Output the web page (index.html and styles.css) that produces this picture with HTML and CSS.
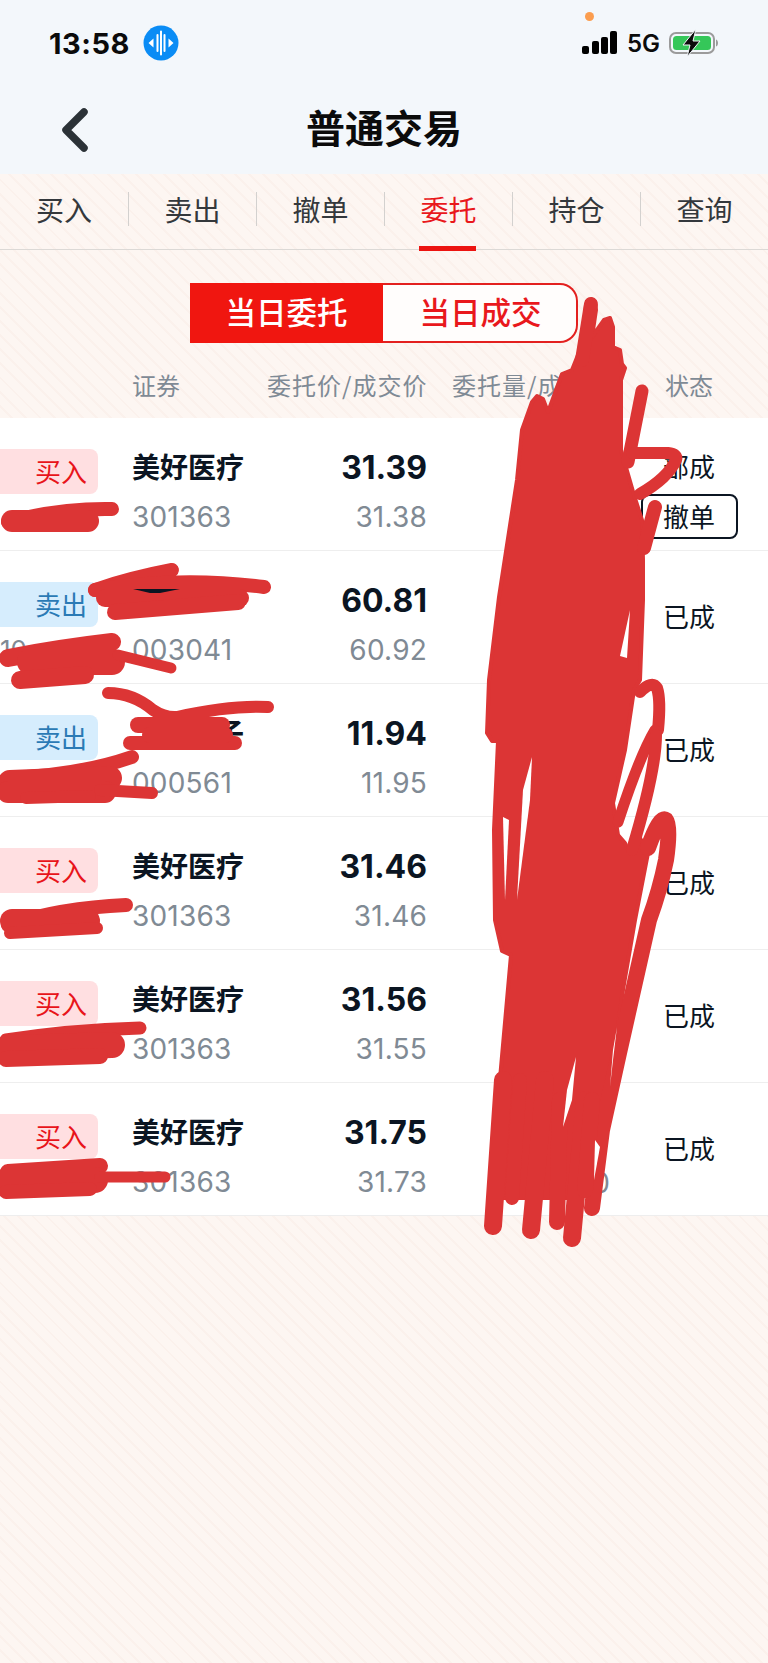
FILE: index.html
```html
<!DOCTYPE html>
<html lang="zh-CN">
<head>
    <meta charset="UTF-8">
    <meta name="viewport" content="width=device-width, initial-scale=1.0">
    <title>普通交易</title>
    <link rel="stylesheet" href="styles.css">
</head>
<body>
    <header class="top">
        <div class="status-bar">
            <div class="status-left">
                <span class="clock">13:58</span>
                <svg class="voice" width="36" height="36" viewBox="0 0 36 36">
                    <circle cx="18" cy="18" r="17.5" fill="#0a8cf5"/>
                    <path d="M14.5 10v16M18 6.5v23M21.500 10v16" stroke="#fff" stroke-width="2" stroke-linecap="round"/>
                    <path d="M10.500 13.500v9L5.500 18zM25.500 13.500v9l5-4.500z" fill="#fff"/>
                </svg>
            </div>
            <span class="mic-dot"></span>
            <div class="status-right">
                <svg width="36" height="24" viewBox="0 0 36 24">
                    <rect x="0" y="15" width="7" height="8" rx="2"/>
                    <rect x="10" y="10" width="7" height="13" rx="2"/>
                    <rect x="19" y="6" width="7" height="17" rx="2"/>
                    <rect x="28" y="0" width="7" height="23" rx="2"/>
                </svg>
                <span class="net">5G</span>
                <svg width="50" height="28" viewBox="0 0 50 28">
                    <rect x="1" y="4" width="44" height="20" rx="6" fill="none" stroke="#9b9b9b" stroke-width="2"/>
                    <rect x="4" y="7" width="38" height="14" rx="3.500" fill="#35c759"/>
                    <path d="M47 10.500c1.500.5 2 2 2 3.500s-.5 3-2 3.500z" fill="#9b9b9b"/>
                    <path d="M27 0 14 16h7l-3 12 13-16h-7z" fill="#0b0b0b" stroke="#f3f7fb" stroke-width="1"/>
                </svg>
            </div>
        </div>
        <nav class="nav-bar">
            <svg class="back" width="32" height="50" viewBox="0 0 32 50">
                <path d="M25 7 7 25l18 18" fill="none" stroke="#2b3237" stroke-width="7.500" stroke-linecap="round" stroke-linejoin="round"/>
            </svg>
            <h1 class="title">普通交易</h1>
        </nav>
    </header>

    <main class="content">
        <ul class="tabs">
            <li class="tab">买入</li>
            <li class="tab">卖出</li>
            <li class="tab">撤单</li>
            <li class="tab active">委托</li>
            <li class="tab">持仓</li>
            <li class="tab">查询</li>
        </ul>

        <div class="segment">
            <div class="seg seg-on">当日委托</div>
            <div class="seg seg-off">当日成交</div>
        </div>

        <div class="list-head">
            <span></span>
            <span>证券</span>
            <span class="price-head">委托价/成交价</span>
            <span class="qty-head">委托量/成交量</span>
            <span class="state-head">状态</span>
        </div>

        <section class="orders">
            <div class="order">
                <div class="side"><span class="badge buy">买入</span></div>
                <div class="stock"><div class="name">美好医疗</div><div class="code">301363</div></div>
                <div class="price"><div class="p1">31.39</div><div class="p2">31.38</div></div>
                <div class="qty"></div>
                <div class="state">
                    <div class="state-text">部成</div>
                    <div class="cancel">撤单</div>
                </div>
            </div>
            <div class="order">
                <div class="side"><span class="badge sell">卖出</span><span class="time">10</span></div>
                <div class="stock"><div class="name">&nbsp;</div><div class="code">003041</div></div>
                <div class="price"><div class="p1">60.81</div><div class="p2">60.92</div></div>
                <div class="qty"></div>
                <div class="state mid">已成</div>
            </div>
            <div class="order">
                <div class="side"><span class="badge sell">卖出</span></div>
                <div class="stock"><div class="name">　　　子</div><div class="code">000561</div></div>
                <div class="price"><div class="p1">11.94</div><div class="p2">11.95</div></div>
                <div class="qty"></div>
                <div class="state mid">已成</div>
            </div>
            <div class="order">
                <div class="side"><span class="badge buy">买入</span></div>
                <div class="stock"><div class="name">美好医疗</div><div class="code">301363</div></div>
                <div class="price"><div class="p1">31.46</div><div class="p2">31.46</div></div>
                <div class="qty"></div>
                <div class="state mid">已成</div>
            </div>
            <div class="order">
                <div class="side"><span class="badge buy">买入</span></div>
                <div class="stock"><div class="name">美好医疗</div><div class="code">301363</div></div>
                <div class="price"><div class="p1">31.56</div><div class="p2">31.55</div></div>
                <div class="qty"></div>
                <div class="state mid">已成</div>
            </div>
            <div class="order">
                <div class="side"><span class="badge buy">买入</span></div>
                <div class="stock"><div class="name">美好医疗</div><div class="code">301363</div></div>
                <div class="price"><div class="p1">31.75</div><div class="p2">31.73</div></div>
                <div class="qty"><div class="q2">0</div></div>
                <div class="state mid">已成</div>
            </div>
        </section>
    </main>

    <!-- red marker scribbles drawn over the screenshot -->
    <svg class="scribble" width="768" height="1663" viewBox="0 0 768 1663">
        <!-- main block over the quantity column -->
        <path class="solid" d="M499 597 517 480 522 430 532 402 537 396 543 399 548 412 562 374 572 370 582 345 586 305 591 300 595 302 596 310 592 337 604 320 610 318 613 327 613 347 620 350 622 364 625 368 621 380 621 450 634 495 642 520 643 560 643 600 640 680 634 690 625 750 613 803 618 835 625 843 628 850 640 838 648 853 635 920 623 990 616 1040 606 1090 598 1190 570 1198 502 1198 492 1147 499 1090 511 955 502 951 495 920 494 830 498 741 492 741 487 733 489 680Z"/>
        <g fill="none">
            <path stroke-width="14" d="M591 304 582 360"/>
            <path stroke-width="13" d="M642 391 628 462"/>
            <path stroke-width="12" d="M632 453H668Q678 454 676 460 668 478 640 494"/>
            <path stroke-width="14" d="M655 507 644 548"/>
            <path stroke-width="12" d="M640 692Q652 680 657 688 661 700 658 730"/>
            <path stroke-width="11" d="M655 730Q640 755 618 822"/>
            <path stroke-width="12" d="M656 735Q656 770 632 850"/>
            <path stroke-width="16" d="M648 848Q660 815 666 820 671 826 666 860 660 890 649 920L619 1053 602 1130 592 1208"/>
            <path stroke-width="18" d="M503 1080 493 1226"/>
            <path stroke-width="14" d="M520 1080 512 1198"/>
            <path stroke-width="18" d="M545 1080 531 1230"/>
            <path stroke-width="16" d="M560 1100 557 1222"/>
            <path stroke-width="18" d="M585 1100 572 1238"/>
            <path stroke-width="16" d="M592 1100 585 1190"/>

            <!-- row 1 left -->
            <path stroke-width="14" d="M8 522Q60 508 112 509"/>
            <path stroke-width="22" d="M12 521H88"/>
            <!-- row 2 -->
            <path stroke-width="14" d="M95 590Q130 578 172 570"/>
            <path stroke-width="14" d="M95 590Q180 576 264 587"/>
            <path stroke-width="18" d="M105 598H240"/>
            <path stroke-width="16" d="M115 612 238 602"/>
            <path stroke-width="18" d="M8 658Q60 648 112 642"/>
            <path stroke-width="26" d="M30 662H112"/>
            <path stroke-width="11" d="M118 655 171 668"/>
            <path stroke-width="18" d="M20 680 85 675"/>
            <!-- row 3 -->
            <path stroke-width="12" d="M108 693Q133 693 153 710 165 718 177 717 230 705 268 707"/>
            <path stroke-width="16" d="M138 725H222"/>
            <path stroke-width="14" d="M130 743H235"/>
            <path stroke-width="16" d="M150 735H225"/>
            <path stroke-width="14" d="M132 757Q80 775 10 778"/>
            <path stroke-width="24" d="M10 782 110 778"/>
            <path stroke-width="22" d="M8 792H105"/>
            <path stroke-width="12" d="M26 798 90 796"/>
            <path stroke-width="12" d="M100 790 152 793"/>
            <!-- row 4 -->
            <path stroke-width="14" d="M8 925Q60 908 126 905"/>
            <path stroke-width="24" d="M12 921H88"/>
            <path stroke-width="12" d="M10 933 97 928"/>
            <!-- row 5 -->
            <path stroke-width="13" d="M6 1040Q70 1030 140 1028"/>
            <path stroke-width="26" d="M8 1048 112 1045"/>
            <path stroke-width="16" d="M6 1059 100 1056"/>
            <!-- row 6 -->
            <path stroke-width="16" d="M8 1172 100 1166"/>
            <path stroke-width="26" d="M8 1180H95"/>
            <path stroke-width="11" d="M100 1177H165"/>
            <path stroke-width="14" d="M6 1192 90 1189"/>
        </g>
        <!-- thin gaps the marker missed -->
        <g class="gap">
            <path d="M630 610 620 656 627 658Z"/>
            <path d="M532 757 530 800 517 900 523 790Z"/>
            <path d="M503 817 509 820 505 900Z"/>
            <path d="M576 1057 572 1100 563 1127 567 1090Z"/>
            <path d="M617 1027 613 1060 610 1087 613 1050Z"/>
            <path d="M595 1140 600 1147 594 1180Z"/>
        </g>
        <path class="ink" d="M133 589H180L160 593H150Z"/>
    </svg>
</body>
</html>
```

FILE: styles.css
```css
* {
    box-sizing: border-box;
}
body {
    position: relative;
    width: 768px;
    height: 1663px;
    margin: 0;
    overflow: hidden;
    font-family: "Noto Sans CJK SC", sans-serif;
    color: #0b1522;
    background: repeating-linear-gradient(45deg, #fdf6f2 0, #fdf6f2 8px, #fbf1ec 8px, #fbf1ec 10px);
}

/* status + nav */
.top {
    background: #f3f7fb;
    height: 174px;
}
.status-bar {
    position: relative;
    display: flex;
    justify-content: space-between;
    align-items: center;
    height: 86px;
    padding: 0 49px;
}
.status-left {
    display: flex;
    align-items: center;
    gap: 13px;
}
.status-right {
    display: flex;
    align-items: center;
    gap: 9px;
}
.clock {
    font-family: Inter, sans-serif;
    font-weight: 700;
    font-size: 29px;
    letter-spacing: 0.5px;
    color: #0b0b0b;
}
.net {
    font-family: Inter, sans-serif;
    font-weight: 600;
    font-size: 24px;
    color: #0b0b0b;
}
.mic-dot {
    position: absolute;
    left: 585px;
    top: 12px;
    width: 9px;
    height: 9px;
    border-radius: 50%;
    background: #fb9d4f;
}
.nav-bar {
    display: grid;
    grid-template-columns: 1fr auto 1fr;
    align-items: center;
    height: 88px;
    padding-left: 59px;
}
.title {
    margin: 0;
    padding: 0 59px 8px 0;
    font-size: 39px;
    font-weight: 700;
    color: #0b0b0b;
}

/* tabs */
.tabs {
    display: flex;
    align-items: center;
    height: 76px;
    margin: 0;
    padding: 0 0 5px;
    list-style-type: none;
    border-bottom: 1px solid #dcd9d6;
}
.tab {
    position: relative;
    flex: 0 0 128px;
    height: 34px;
    line-height: 34px;
    text-align: center;
    font-size: 28px;
    color: #34383c;
}
.tab + .tab {
    border-left: 1px solid #d3d1cf;
}
.tab.active {
    color: #e9181c;
}
.tab.active::after {
    content: "";
    position: absolute;
    left: 34px;
    width: 57px;
    bottom: -25px;
    height: 5px;
    background: #ec1411;
}

/* segment */
.segment {
    display: flex;
    width: 388px;
    height: 60px;
    margin: 33px auto 0;
}
.seg {
    display: flex;
    align-items: center;
    justify-content: center;
    padding-bottom: 4px;
    font-size: 30.5px;
    font-weight: 500;
}
.seg-on {
    width: 193px;
    background: #f01610;
    color: #fff;
}
.seg-off {
    width: 195px;
    padding-left: 2px;
    background: #fffdfc;
    color: #e9181c;
    border: 2px solid #e3201f;
    border-left: none;
    border-radius: 0 18px 18px 0;
}

/* list */
.list-head,
.order {
    display: grid;
    grid-template-columns: 132px 135px 160px 183px 158px;
}
.list-head {
    align-items: center;
    height: 75px;
    padding-top: 7px;
    font-size: 24px;
    color: #7f8a95;
}
.price-head {
    white-space: nowrap;
    text-align: right;
    letter-spacing: 1px;
}
.qty-head {
    padding-left: 25px;
    white-space: nowrap;
    letter-spacing: 1px;
}
.state-head {
    text-align: center;
}
.orders {
    background: #fff;
}
.order {
    height: 133px;
    border-bottom: 1px solid #eeeeee;
}
.side {
    display: flex;
    flex-direction: column;
    align-items: flex-start;
    padding-top: 31px;
}
.badge {
    width: 98px;
    height: 45px;
    line-height: 43px;
    padding-left: 35px;
    border-radius: 0 8px 8px 0;
    font-size: 26px;
}
.buy {
    background: #ffdfe1;
    color: #e8141a;
}
.sell {
    background: #d6edfd;
    color: #2a7ab5;
}
.time {
    margin-top: 5px;
    line-height: 36px;
    font-family: Inter, sans-serif;
    font-size: 26px;
    color: #808a94;
}
.stock,
.qty {
    padding-top: 25px;
}
.price {
    padding-top: 27px;
    text-align: right;
}
.name,
.p1 {
    height: 46px;
    line-height: 46px;
    font-weight: 700;
}
.name {
    font-size: 28px;
}
.code,
.p2,
.q2 {
    height: 46px;
    line-height: 46px;
    font-family: Inter, sans-serif;
    font-size: 28px;
    letter-spacing: 0.2px;
    color: #808a94;
}
.code {
    margin-top: 5px;
}
.p2 {
    margin-top: 3px;
}
.p1 {
    font-family: Inter, sans-serif;
    font-size: 32px;
    color: #0b1522;
}
.qty {
    padding-top: 77px;
    text-align: right;
}
.state {
    display: flex;
    flex-direction: column;
    align-items: center;
    font-size: 26px;
}
.state.mid {
    justify-content: center;
    padding-bottom: 4px;
}
.state-text {
    margin-top: 25px;
    height: 46px;
    line-height: 46px;
}
.cancel {
    width: 97px;
    height: 45px;
    margin-top: 5px;
    line-height: 40px;
    text-align: center;
    border: 2px solid #0b1522;
    border-radius: 8px;
    background: #fff;
}

/* marker scribbles on top of everything */
.scribble {
    position: absolute;
    left: 0;
    top: 0;
}
.scribble g path {
    stroke: #dc3535;
    stroke-linecap: round;
    stroke-linejoin: round;
}
.scribble .solid {
    fill: #dc3535;
    stroke: #dc3535;
    stroke-width: 4;
    stroke-linejoin: round;
}
.scribble .gap path {
    fill: #fff;
    stroke: none;
}
.scribble .ink {
    fill: #0b1522;
}
```
